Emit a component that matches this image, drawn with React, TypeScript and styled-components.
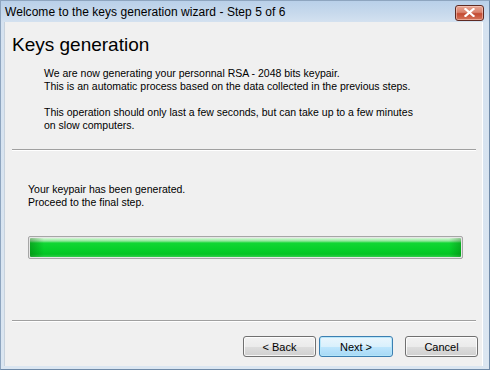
import React from "react";
import styled, { createGlobalStyle } from "styled-components";

const Global = createGlobalStyle`
  html, body { margin: 0; padding: 0; background: #f0f0f0; }
  #root { width: 490px; height: 370px; }
`;

const Window = styled.div`
  width: 490px;
  height: 370px;
  box-sizing: border-box;
  display: flex;
  flex-direction: column;
  background: linear-gradient(180deg, #b9d0e9 0px, #c7d9ec 12px, #d5e2f0 22px, #dbe6f1 100%);
  border-left: 1px solid #8ea5bf;
  border-right: 1px solid #6f8aa8;
  border-bottom: 1px solid #6f8aa8;
  border-top: 1px solid #8ea5bf;
  padding: 0 6px 3px 3px;
  overflow: hidden;
`;

const TitleBar = styled.div`
  height: 21px;
  flex: none;
  display: flex;
  align-items: center;
  justify-content: space-between;
  padding-left: 1px;
`;

const TitleText = styled.span`
  font-family: "Liberation Sans", Arial, sans-serif;
  font-size: 12px;
  color: #000;
  letter-spacing: 0.05px;
`;

const CloseButton = styled.div`
  width: 27px;
  height: 14px;
  margin-right: -1px;
  margin-top: 2px;
  border: 1px solid #5e2a22;
  border-radius: 3px;
  background: linear-gradient(180deg, #e8a593 0%, #d9826d 45%, #c34a32 55%, #d5745a 100%);
  display: flex;
  align-items: center;
  justify-content: center;
  box-shadow: inset 0 0 0 1px rgba(255, 220, 210, 0.5);
`;

const Client = styled.div`
  flex: 1;
  background: #f0f0f0;
  border-left: 1px solid #c8d2dc;
  border-right: 1px solid #ffffff;
  display: flex;
  flex-direction: column;
  padding: 0 4px 0 6px;
`;

const Heading = styled.h1`
  margin: 12px 0 0 1px;
  font-family: "Liberation Sans", Arial, sans-serif;
  font-weight: normal;
  font-size: 19px;
  line-height: 22px;
  color: #000;
`;

const Para = styled.p<{ $indent: number; $top: number }>`
  margin: ${(p) => p.$top}px 0 0 ${(p) => p.$indent}px;
  font-family: "Liberation Sans", Arial, sans-serif;
  font-size: 10.5px;
  line-height: 13px;
  color: #000;
`;

const Separator = styled.div<{ $top: number }>`
  margin: ${(p) => p.$top}px 2px 0 1px;
  height: 1px;
  background: #a0a0a0;
  border-bottom: 1px solid #ffffff;
`;

const Progress = styled.div`
  margin: 27px 0 0 17px;
  width: 435px;
  height: 23px;
  box-sizing: border-box;
  border: 1px solid #a6a6a6;
  border-radius: 2px;
  background: #e6e6e6;
  padding: 1px;
`;

const ProgressFill = styled.div`
  height: 100%;
  border-radius: 1px;
  background:
    linear-gradient(90deg, rgba(0, 80, 0, 0.35) 0px, rgba(0, 80, 0, 0) 14px, rgba(0, 80, 0, 0) calc(100% - 12px), rgba(0, 80, 0, 0.3) 100%),
    linear-gradient(180deg, #d8f8d8 0px, #8ee89a 3px, #11d634 5px, #06d02a 60%, #04c424 85%, #2fcf49 100%);
`;

const Footer = styled.div`
  display: flex;
  justify-content: flex-end;
  align-items: center;
  margin-top: 14px;
`;

const Button = styled.button<{ $default?: boolean; $gap?: number }>`
  width: ${(p) => (p.$default ? 74 : 73)}px;
  height: 21px;
  margin-left: ${(p) => p.$gap ?? 0}px;
  font-family: "Liberation Sans", Arial, sans-serif;
  font-size: 11px;
  color: #000;
  border-radius: 3px;
  padding: 0;
  border: 1px solid ${(p) => (p.$default ? "#3c7fb1" : "#707070")};
  background: ${(p) =>
    p.$default
      ? "linear-gradient(180deg, #eaf6fd 0%, #d9f0fc 50%, #bee6fd 51%, #a7d9f5 100%)"
      : "linear-gradient(180deg, #f2f2f2 0%, #ebebeb 50%, #dddddd 51%, #cfcfcf 100%)"};
  box-shadow: inset 0 0 0 1px ${(p) => (p.$default ? "rgba(180,230,250,0.9)" : "rgba(255,255,255,0.8)")};
`;

export default function App() {
  return (
    <>
      <Global />
      <Window>
        <TitleBar>
          <TitleText>Welcome to the keys generation wizard - Step 5 of 6</TitleText>
          <CloseButton>
            <svg width="11" height="9" viewBox="0 0 11 9">
              <path d="M1.5 1 L9.5 8 M9.5 1 L1.5 8" stroke="#ffffff" strokeWidth="2.2" strokeLinecap="square" />
            </svg>
          </CloseButton>
        </TitleBar>
        <Client>
          <Heading>Keys generation</Heading>
          <Para $indent={33} $top={11}>
            We are now generating your personnal RSA - 2048 bits keypair.
            <br />
            This is an automatic process based on the data collected in the previous steps.
          </Para>
          <Para $indent={33} $top={13}>
            This operation should only last a few seconds, but can take up to a few minutes
            <br />
            on slow computers.
          </Para>
          <Separator $top={17} />
          <Para $indent={17} $top={32}>
            Your keypair has been generated.
            <br />
            Proceed to the final step.
          </Para>
          <Progress>
            <ProgressFill />
          </Progress>
          <Separator $top={61} />
          <Footer>
            <Button>&lt; Back</Button>
            <Button $default $gap={3}>Next &gt;</Button>
            <Button $gap={12}>Cancel</Button>
          </Footer>
        </Client>
      </Window>
    </>
  );
}
